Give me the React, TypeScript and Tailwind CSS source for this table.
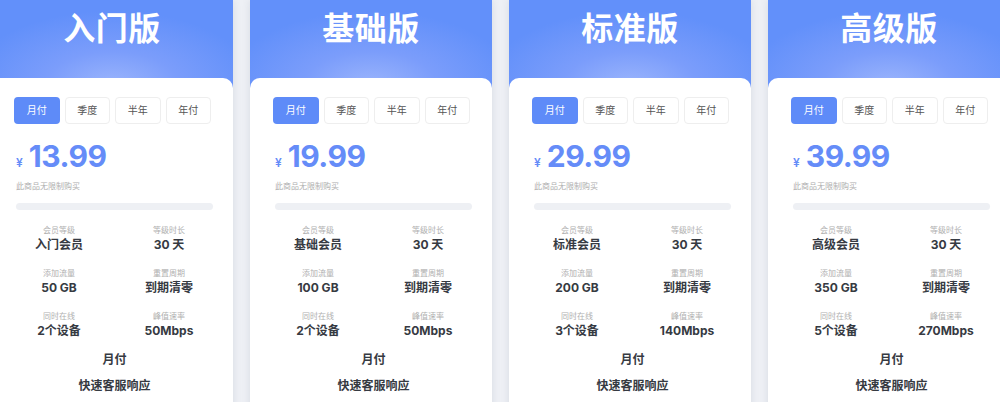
import React from "react";

type Plan = {
  title: string;
  price: string;
  level: string;
  traffic: string;
  devices: string;
  speed: string;
};

const plans: Plan[] = [
  { title: "入门版", price: "13.99", level: "入门会员", traffic: "50 GB", devices: "2个设备", speed: "50Mbps" },
  { title: "基础版", price: "19.99", level: "基础会员", traffic: "100 GB", devices: "2个设备", speed: "50Mbps" },
  { title: "标准版", price: "29.99", level: "标准会员", traffic: "200 GB", devices: "3个设备", speed: "140Mbps" },
  { title: "高级版", price: "39.99", level: "高级会员", traffic: "350 GB", devices: "5个设备", speed: "270Mbps" },
];

const font = { fontFamily: '"Inter", "Noto Sans CJK SC", sans-serif' };

function Info({ label, value }: { label: string; value: string }) {
  return (
    <div className="flex flex-col items-center">
      <div className="text-[8px] leading-[10px] text-[#b0b0b0]">{label}</div>
      <div className="mt-[3px] text-[12px] leading-[14px] font-bold text-[#363a42]">{value}</div>
    </div>
  );
}

function Column({ plan }: { plan: Plan }) {
  const tabs = ["月付", "季度", "半年", "年付"];
  return (
    <div className="w-[242px] shrink-0 flex flex-col shadow-[0_0_8px_rgba(60,70,100,0.12)]">
      <div className="h-[92px] bg-[radial-gradient(ellipse_60%_80%_at_50%_92%,#9ab4fc_0%,#7b9dfb_45%,#6290fa_100%)] flex justify-center pt-[9px]">
        <div className="text-white text-[32px] leading-[40px] font-bold tracking-[0.5px]">{plan.title}</div>
      </div>
      <div className="-mt-[14px] bg-white rounded-t-[10px] pt-[19px] h-[340px]">
        <div className="ml-[23px] mr-[22px] grid grid-cols-4 gap-[5px]">
          {tabs.map((t, i) => (
            <div
              key={t}
              className={
                i === 0
                  ? "h-[27px] rounded-[4px] bg-[#5e8bf8] text-white text-[10px] flex items-center justify-center"
                  : "h-[27px] rounded-[4px] bg-white border border-[#eeeeee] text-[#555] text-[10px] flex items-center justify-center"
              }
            >
              {t}
            </div>
          ))}
        </div>
        <div className="ml-[25px] mt-[16px] flex items-baseline text-[#658cf8] h-[32px]">
          <span className="text-[12px] font-semibold mr-[6px]">¥</span>
          <span className="text-[30px] leading-[32px] font-bold tracking-[-0.5px]">{plan.price}</span>
        </div>
        <div className="ml-[25px] mt-[9px] text-[8px] leading-[10px] text-[#aeaeae]">此商品无限制购买</div>
        <div className="ml-[25px] mt-[12px] w-[197px] h-[7px] rounded-full bg-[#eef0f4]"></div>
        <div className="ml-[13px] w-[220px] mt-[15px] grid grid-cols-2 gap-y-[16px]">
          <Info label="会员等级" value={plan.level} />
          <Info label="等级时长" value="30 天" />
          <Info label="添加流量" value={plan.traffic} />
          <Info label="重置周期" value="到期清零" />
          <Info label="同时在线" value={plan.devices} />
          <Info label="峰值速率" value={plan.speed} />
        </div>
        <div className="ml-[25px] w-[197px] mt-[14px] flex flex-col items-center text-[12px] leading-[16px] font-bold text-[#363a42]">
          <div>月付</div>
          <div className="mt-[10px]">快速客服响应</div>
        </div>
      </div>
    </div>
  );
}

export default function App() {
  return (
    <div className="w-[1000px] h-[402px] overflow-hidden bg-[#eef0f5]" style={font}>
      <div className="flex gap-[17px] ml-[-9px]">
        {plans.map((p) => (
          <Column key={p.title} plan={p} />
        ))}
      </div>
    </div>
  );
}
